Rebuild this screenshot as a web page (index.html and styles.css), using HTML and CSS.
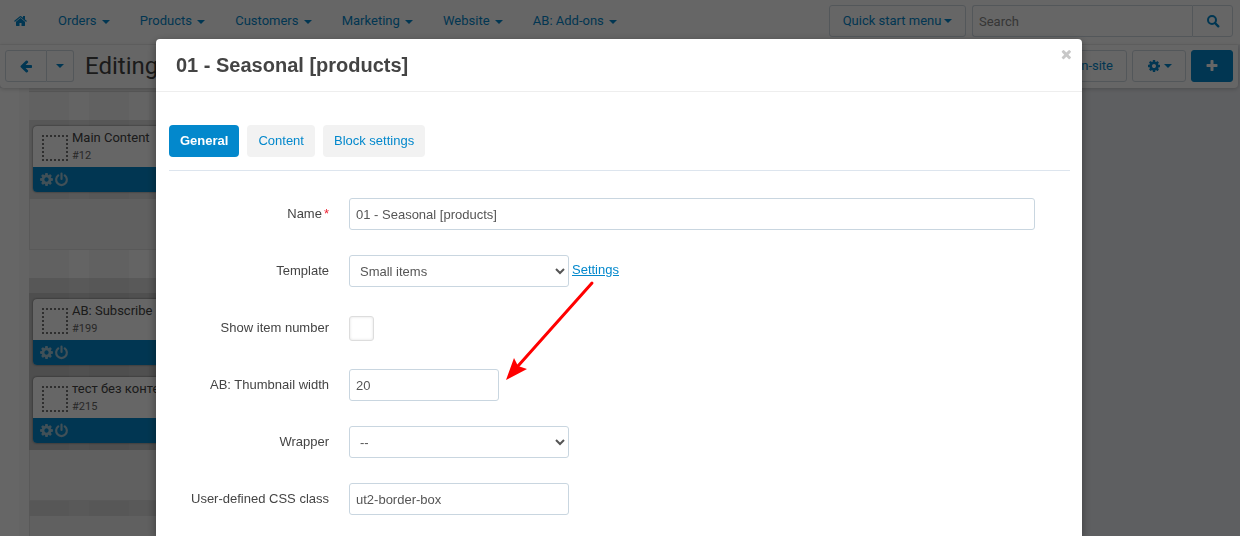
FILE: index.html
```
<!DOCTYPE html>
<html lang="en">
<head>
  <meta charset="UTF-8" />
  <meta name="viewport" content="width=device-width, initial-scale=1.0" />
  <title>Editing layout</title>
  <link rel="stylesheet" href="styles.css">
</head>
<body>
  <!-- shared icons -->
  <svg class="sprite" aria-hidden="true">
    <symbol id="home" viewBox="0 0 1792 1792"><path d="M1408 992v480q0 26-19 45t-45 19h-384v-384h-256v384h-384q-26 0-45-19t-19-45v-480q0-1 .5-3t.5-3l575-474 575 474q1 2 1 6zm223-69l-62 74q-8 9-21 11h-3q-13 0-21-7l-692-577-692 577q-12 8-24 7-13-2-21-11l-62-74q-8-10-7-23.5t11-21.5l719-599q32-26 76-26t76 26l244 204v-195q0-14 9-23t23-9h192q14 0 23 9t9 23v408l219 182q10 8 11 21.5t-7 23.5z"/></symbol>
    <symbol id="cog" viewBox="0 0 1792 1792"><path d="M1152 896q0-106-75-181t-181-75-181 75-75 181 75 181 181 75 181-75 75-181zm512-109v222q0 12-8 23t-20 13l-185 28q-19 54-39 91 35 50 107 138 10 12 10 25t-9 23q-27 37-99 108t-94 71q-12 0-26-9l-138-108q-44 23-91 38-16 136-29 186-7 28-36 28h-222q-14 0-24.5-8.5t-11.5-21.5l-28-184q-49-16-90-37l-141 107q-10 9-25 9-14 0-25-11-126-114-165-168-7-10-7-23 0-12 8-23 15-21 51-66.5t54-70.5q-27-50-41-99l-183-27q-13-2-21-12.5t-8-23.5v-222q0-12 8-23t19-13l186-28q14-46 39-92-40-57-107-138-10-12-10-24 0-10 9-23 26-36 98.5-107.5t94.5-71.5q13 0 26 10l138 107q44-23 91-38 16-136 29-186 7-28 36-28h222q14 0 24.5 8.5t11.5 21.5l28 184q49 16 90 37l142-107q9-9 24-9 13 0 25 10 129 119 165 170 7 8 7 22 0 12-8 23-15 21-51 66.5t-54 70.5q26 50 41 98l183 28q13 2 21 12.5t8 23.5z"/></symbol>
    <symbol id="back" viewBox="0 0 1792 1792"><path d="M1664 896v128q0 53-32.5 90.5t-84.5 37.5h-704l293 294q38 36 38 90t-38 90l-75 76q-37 37-90 37-52 0-91-37l-651-652q-37-37-37-90 0-52 37-91l651-650q38-38 91-38 52 0 90 38l75 74q38 38 38 91t-38 91l-293 293h704q52 0 84.5 37.5t32.5 90.5z"/></symbol>
    <symbol id="plus" viewBox="0 0 1792 1792"><path d="M1600 736v192q0 40-28 68t-68 28h-416v416q0 40-28 68t-68 28h-192q-40 0-68-28t-28-68v-416h-416q-40 0-68-28t-28-68v-192q0-40 28-68t68-28h416v-416q0-40 28-68t68-28h192q40 0 68 28t28 68v416h416q40 0 68 28t28 68z"/></symbol>
    <symbol id="search" viewBox="0 0 14 14"><circle cx="6" cy="6" r="4" fill="none" stroke="currentColor" stroke-width="2"/><path d="M9 9l3.300 3.300" stroke="currentColor" stroke-width="2.400" stroke-linecap="round"/></symbol>
    <symbol id="power" viewBox="0 0 14 14"><path d="M4 3.200a5 5 0 1 0 6 0M7 1.500v5" fill="none" stroke="currentColor" stroke-width="2" stroke-linecap="round"/></symbol>
  </svg>

  <header class="topbar">
    <nav class="menu">
      <a class="home" href="#" aria-label="Home"><svg class="icon"><use href="#home"/></svg></a>
      <a href="#">Orders <i class="caret"></i></a>
      <a href="#">Products <i class="caret"></i></a>
      <a href="#">Customers <i class="caret"></i></a>
      <a href="#">Marketing <i class="caret"></i></a>
      <a href="#">Website <i class="caret"></i></a>
      <a href="#">AB: Add-ons <i class="caret"></i></a>
    </nav>
    <button class="btn quick">Quick start menu <i class="caret"></i></button>
    <form class="search">
      <input type="text" placeholder="Search" aria-label="Search">
      <button class="btn" type="button" aria-label="Find"><svg class="icon"><use href="#search"/></svg></button>
    </form>
  </header>

  <div class="actions">
    <div class="btn-group">
      <button class="btn back" aria-label="Back"><svg class="icon"><use href="#back"/></svg></button>
      <button class="btn more" aria-label="More"><i class="caret"></i></button>
    </div>
    <h1>Editing layout</h1>
    <button class="btn">Edit content on-site</button>
    <button class="btn gear" aria-label="Tools"><svg class="icon"><use href="#cog"/></svg><i class="caret"></i></button>
    <button class="btn btn-primary" aria-label="Add"><svg class="icon"><use href="#plus"/></svg></button>
  </div>

  <main class="workspace">
    <div class="layout">
      <div class="layout-grid">
        <div class="container header-end"></div>
        <div class="container">
          <div class="grid">
            <div class="block">
              <div class="block-title"><span class="thumb"></span><p>Main Content<small>#12</small></p></div>
              <div class="block-tools"><svg class="icon"><use href="#cog"/></svg><svg class="icon"><use href="#power"/></svg></div>
            </div>
          </div>
          <div class="empty"></div>
        </div>
        <div class="container">
          <div class="strip"></div>
          <div class="grid grid-dark">
            <div class="block">
              <div class="block-title"><span class="thumb"></span><p>AB: Subscribe<small>#199</small></p></div>
              <div class="block-tools"><svg class="icon"><use href="#cog"/></svg><svg class="icon"><use href="#power"/></svg></div>
            </div>
            <div class="block">
              <div class="block-title"><span class="thumb"></span><p>тест без контента<small>#215</small></p></div>
              <div class="block-tools"><svg class="icon"><use href="#cog"/></svg><svg class="icon"><use href="#power"/></svg></div>
            </div>
          </div>
          <div class="empty"></div>
          <div class="strip"></div>
          <div class="empty"></div>
        </div>
      </div>
    </div>
  </main>

  <div class="overlay">
    <section class="modal" role="dialog" aria-labelledby="modalTitle">
      <div class="modal-header">
        <h2 id="modalTitle">01 - Seasonal [products]</h2>
        <button class="close" aria-label="Close"><svg class="icon"><use href="#plus"/></svg></button>
      </div>
      <div class="modal-body">
        <div class="tabs">
          <button class="tab active">General</button>
          <button class="tab">Content</button>
          <button class="tab">Block settings</button>
        </div>
        <form class="fields">
          <div class="row">
            <label for="name">Name<span class="required">*</span></label>
            <input class="wide" type="text" id="name" value="01 - Seasonal [products]">
          </div>
          <div class="row">
            <label for="template">Template</label>
            <div class="control">
              <select id="template"><option>Small items</option></select>
              <div class="settings">
                <a href="#">Settings</a>
                <svg class="arrow" viewBox="0 0 90 102"><path d="M87 4L13 87" stroke="#f00" stroke-width="3" stroke-linecap="round"/><path d="M1 101L9 79L13 87L22 90Z" fill="#f00"/></svg>
              </div>
            </div>
          </div>
          <div class="row">
            <label for="number">Show item number</label>
            <input type="checkbox" id="number">
          </div>
          <div class="row">
            <label for="thumb">AB: Thumbnail width</label>
            <input class="short" type="text" id="thumb" value="20">
          </div>
          <div class="row">
            <label for="wrapper">Wrapper</label>
            <select id="wrapper"><option>--</option></select>
          </div>
          <div class="row">
            <label for="css">User-defined CSS class</label>
            <input type="text" id="css" value="ut2-border-box">
          </div>
        </form>
      </div>
    </section>
  </div>
</body>
</html>
```
FILE: styles.css
```
* {
  box-sizing: border-box;
}

body {
  margin: 0;
  height: 100vh;
  overflow: hidden;
  display: flex;
  flex-direction: column;
  font-family: Roboto, sans-serif;
  font-size: 13px;
  line-height: 20px;
  color: #444;
  background: #ebedf2;
}

a {
  color: #0388cc;
  text-decoration: none;
}

button, input, select {
  font: inherit;
  color: inherit;
}

.sprite {
  position: absolute;
  width: 0;
  height: 0;
}

.icon {
  width: 14px;
  height: 14px;
  fill: currentColor;
  flex: none;
}

.caret {
  display: inline-block;
  border: 4px solid transparent;
  border-top-color: currentColor;
  border-bottom: 0;
  margin-left: 2px;
  vertical-align: middle;
}

.btn {
  display: flex;
  align-items: center;
  justify-content: center;
  height: 32px;
  padding: 0 13px;
  color: #0388cc;
  background: #fff;
  border: 1px solid #d0dae2;
  border-radius: 3px;
  white-space: nowrap;
}

.btn .caret {
  margin-left: 3px;
}

.topbar {
  display: flex;
  align-items: center;
  gap: 6px;
  padding: 5px 7px 7px 14px;
  background: #fff;
  border-bottom: 1px solid #f4f4f4;
}

.menu {
  display: flex;
  align-items: center;
  gap: 30px;
  flex: 1;
}

.home {
  display: flex;
}

.quick {
  width: 137px;
}

.search {
  display: flex;
}

.search input {
  width: 220px;
  height: 32px;
  padding: 0 6px;
  border: 1px solid #d0dae2;
  border-right: 0;
  border-radius: 3px 0 0 3px;
}

.search input::placeholder {
  color: #888;
}

.search .btn {
  width: 41px;
  border-radius: 0 3px 3px 0;
}

.actions {
  display: flex;
  align-items: center;
  gap: 5px;
  margin-right: 2px;
  padding: 5px 5px 6px;
  background: #fff;
  border-radius: 0 0 4px 4px;
  box-shadow: 0 1px 4px rgba(0, 0, 0, 0.2);
  z-index: 1;
}

.actions h1 {
  flex: 1;
  margin: 0 0 0 6px;
  font-size: 24px;
  font-weight: 400;
  line-height: 32px;
}

.btn-group {
  display: flex;
}

.back {
  width: 42px;
  border-radius: 3px 0 0 3px;
}

.more {
  width: 25px;
  border-left: 0;
  border-radius: 0 3px 3px 0;
}

.more .caret {
  margin: 0;
}

.gear {
  width: 54px;
}

.btn-primary {
  width: 42px;
  color: #fff;
  background: #0388cc;
  border-color: #0388cc;
}

.workspace {
  flex: 1;
  min-height: 0;
  overflow: hidden;
}

.layout {
  width: 80%;
  min-height: 100%;
  padding: 0 10px 0 19px;
  background: #fff;
}

.layout-grid {
  padding-left: 10px;
  background: repeating-linear-gradient(90deg, #f3f3f3 0, #f3f3f3 40px, #f9f9f9 40px, #f9f9f9 60px) 10px 0 no-repeat #f9f9f9;
}

.container {
  margin-bottom: 28px;
}

.header-end {
  height: 4px;
  background: #ececec;
  border-bottom: 1px solid #d8d8d8;
}

.grid {
  display: flex;
  flex-direction: column;
  gap: 12px;
  padding: 6px 4px 7px;
  background: rgba(0, 0, 0, 0.1);
}

.grid-dark {
  background: rgba(0, 0, 0, 0.2);
}

.strip {
  height: 15px;
  background: rgba(0, 0, 0, 0.1);
}

.empty {
  height: 51px;
  background: #f0f0f0;
  border: 1px solid #dedede;
  border-top: 0;
}

.block {
  background: #fff;
  border-radius: 4px;
  box-shadow: 0 0 2px rgba(0, 0, 0, 0.6);
  overflow: hidden;
}

.block-title {
  display: flex;
  gap: 4px;
  height: 41px;
  padding: 2px 9px;
}

.block-title p {
  margin: 0;
}

.block-title small {
  display: block;
  font-size: 11px;
  line-height: 16px;
  color: #666;
}

.thumb {
  width: 26px;
  height: 26px;
  margin-top: 7px;
  border: 2px dotted #777;
}

.block-tools {
  display: flex;
  align-items: center;
  height: 25px;
  padding-left: 6px;
  color: #a4c8da;
  background: #0388cc;
}

.block-tools .icon {
  width: 15px;
  height: 15px;
}

.overlay {
  position: fixed;
  inset: 0;
  z-index: 10;
  display: flex;
  padding: 39px 158px 0 156px;
  background: rgba(0, 0, 0, 0.6);
}

.modal {
  flex: 1;
  font-family: "Liberation Sans", Arial, sans-serif;
  background: #fff;
  border-radius: 4px 4px 0 0;
  box-shadow: 0 3px 10px rgba(0, 0, 0, 0.4);
}

.modal-header {
  display: flex;
  align-items: flex-start;
  justify-content: space-between;
  padding: 8px 9px 8px 20px;
  border-bottom: 1px solid #eee;
}

.modal-header h2 {
  margin: 0;
  font-size: 20px;
  line-height: 36px;
}

.close {
  padding: 1px 0 0;
  border: 0;
  background: none;
  color: #c8c8c8;
  line-height: 0;
}

.close .icon {
  transform: rotate(45deg);
}

.modal-body {
  padding: 33px 12px 0 13px;
}

.tabs {
  display: flex;
  gap: 8px;
  padding-bottom: 13px;
  border-bottom: 1px solid #dde5ee;
}

.tab {
  height: 32px;
  padding: 0 11px;
  border: 0;
  border-radius: 4px;
  color: #0388cc;
  background: #f2f2f2;
}

.tab.active {
  color: #fff;
  background: #0388cc;
  font-weight: bold;
}

.fields {
  display: flex;
  flex-direction: column;
  gap: 25px;
  padding: 27px 35px 0 0;
}

.row {
  display: flex;
  align-items: center;
  gap: 20px;
  min-height: 32px;
}

.row label {
  width: 160px;
  text-align: right;
}

.required {
  margin-left: 2px;
  color: #ee2233;
}

.row input[type="text"], .row select {
  width: 220px;
  height: 32px;
  padding: 0 6px;
  color: #555;
  background: #fff;
  border: 1px solid #c9d6e0;
  border-radius: 3px;
}

.row .wide {
  flex: 1;
}

.row input.short {
  width: 150px;
}

.row input[type="checkbox"] {
  appearance: none;
  width: 25px;
  height: 25px;
  margin: 0;
  border: 1px solid #ddd;
  border-radius: 3px;
  box-shadow: inset 0 0 3px rgba(0, 0, 0, 0.12);
}

.control {
  display: flex;
  gap: 3px;
}

.settings {
  position: relative;
  padding-top: 5px;
}

.settings a {
  text-decoration: underline;
}

/* arrow from the link down to the thumbnail width */
.arrow {
  position: absolute;
  top: 24px;
  left: -67px;
  width: 90px;
  height: 102px;
}
```
